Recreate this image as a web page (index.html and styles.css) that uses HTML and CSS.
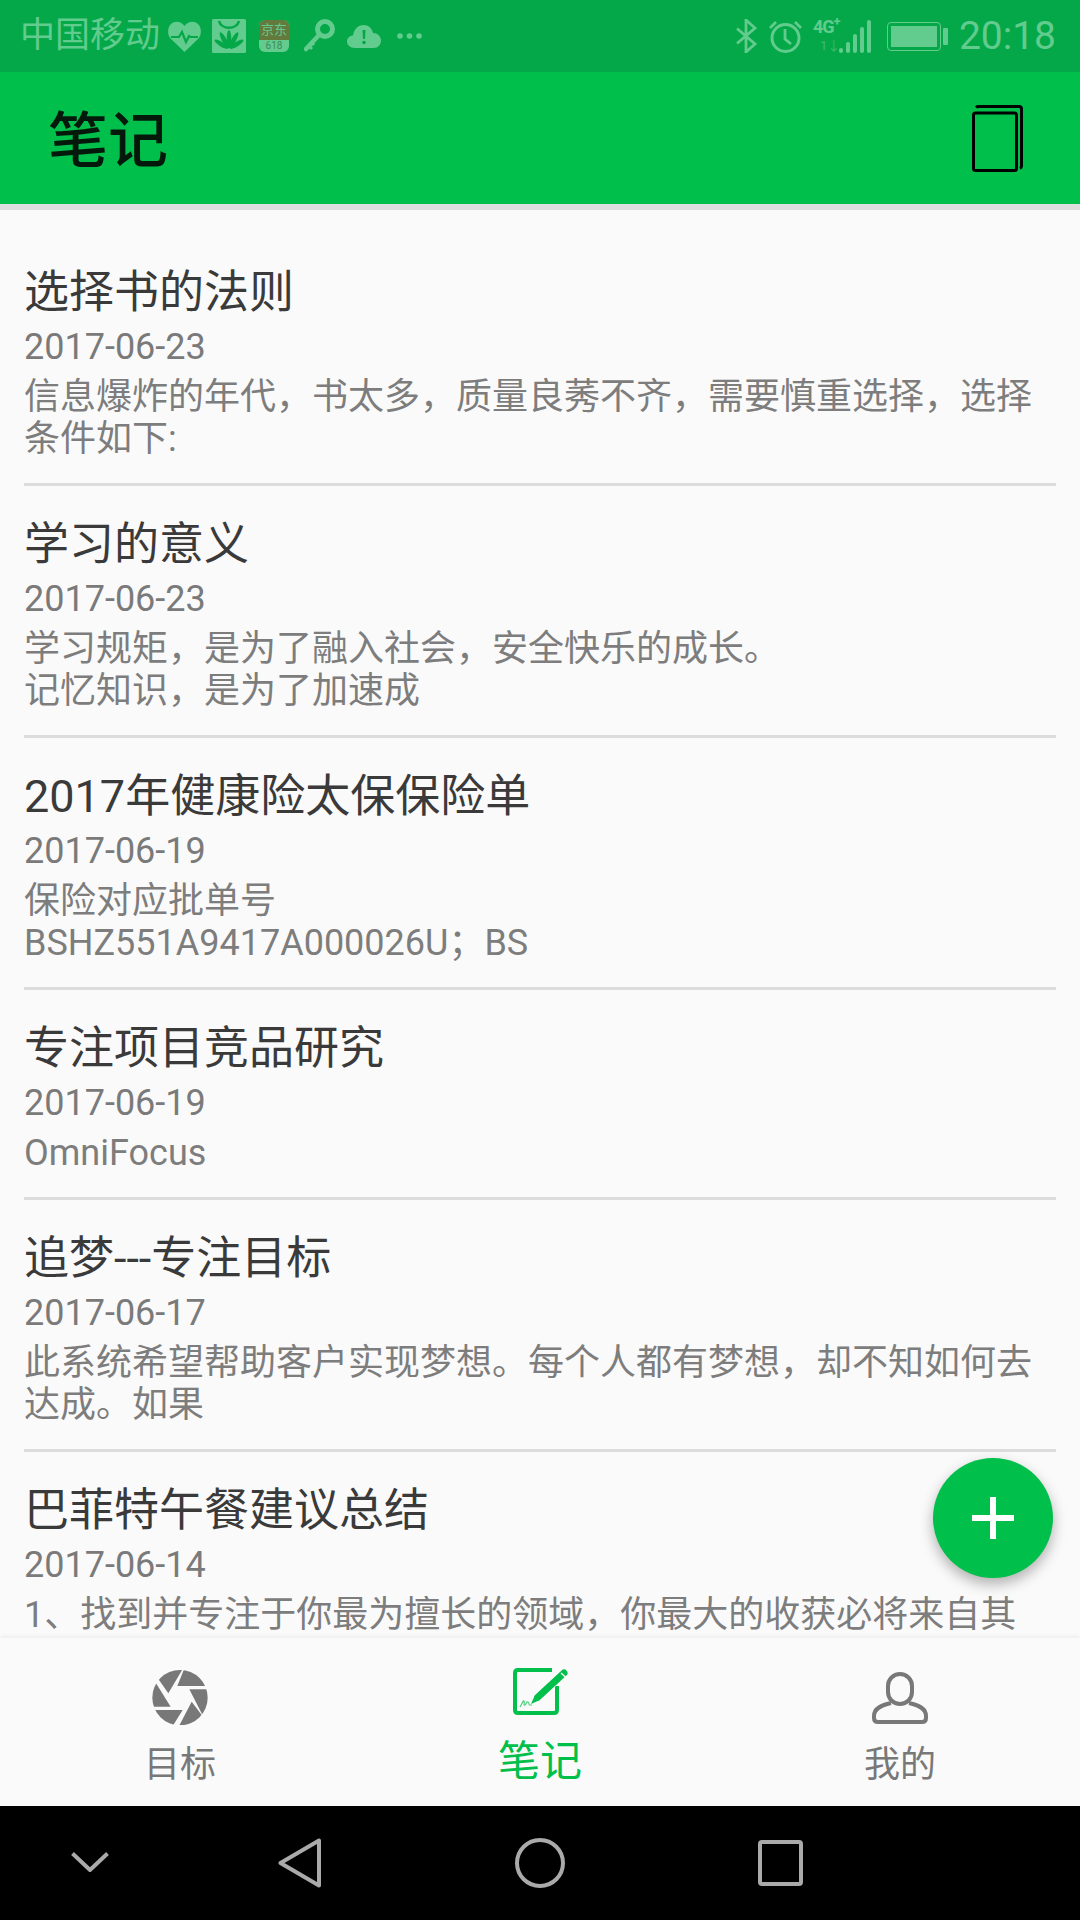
FILE: index.html
```html
<!DOCTYPE html>
<html lang="zh-CN">
<head>
  <meta charset="UTF-8" />
  <title>笔记</title>
  <link rel="stylesheet" href="styles.css">
</head>
<body>
  <div class="screen">

    <!-- Status bar -->
    <div class="status-bar">
      <div class="status-left">
        <span class="carrier">中国移动</span>
        <svg class="ic-heart" viewBox="0 0 33 31"><path d="M16.500 31 2.500 17.500C-1 13.500-.5 6 3 3c4-3.500 10-3 13.500 2C20 0 26-.5 30 3c3.500 3 4 10.500.5 14.500Z" fill="#62cb8e"/><path d="M3 16h8l3-5 4 10 3-6 1.500 1H30" fill="none" stroke="#05a848" stroke-width="2.200"/></svg>
        <svg class="ic-bag" viewBox="0 0 34 34"><rect width="34" height="34" rx="1.500" fill="#62cb8e"/><path d="M7 2c2 9 18 9 20 0" fill="none" stroke="#05a848" stroke-width="2.500"/><g fill="#05a848"><ellipse cx="17" cy="20" rx="2.300" ry="9"/><ellipse cx="17" cy="20" rx="2.300" ry="9" transform="rotate(-28 17 30)"/><ellipse cx="17" cy="20" rx="2.300" ry="9" transform="rotate(28 17 30)"/><ellipse cx="17" cy="21" rx="2.300" ry="8" transform="rotate(-58 17 30)"/><ellipse cx="17" cy="21" rx="2.300" ry="8" transform="rotate(58 17 30)"/></g></svg>
        <span class="ic-jd"><span class="jd-name">京东</span><span class="jd-sale">618</span></span>
        <svg class="ic-key" viewBox="0 0 31 34"><circle cx="21" cy="10" r="7.500" fill="none" stroke="#62cb8e" stroke-width="5"/><path d="M15 16 2 30" stroke="#62cb8e" stroke-width="4.500" stroke-linecap="round"/><path d="m5 27 3 3M8 24l2 2" stroke="#62cb8e" stroke-width="3"/></svg>
        <svg class="ic-cloud" viewBox="0 0 34 23"><path d="M8 23C3 23 0 20 0 16.500 0 13 3 10.500 6 10.500 7 4 11.500 0 16.500 0 21.500 0 25 3.500 26 8c4.500 0 8 3.500 8 7.500 0 4-3 7.500-7.500 7.500Z" fill="#62cb8e"/><path d="M15.500 5h3l-.5 9h-2Z" fill="#05a848"/><circle cx="17" cy="17.500" r="1.800" fill="#05a848"/></svg>
        <svg class="ic-dots" viewBox="0 0 25 6"><circle cx="3" cy="3" r="2.800"/><circle cx="12.500" cy="3" r="2.800"/><circle cx="22" cy="3" r="2.800"/></svg>
      </div>
      <div class="status-right">
        <svg class="ic-bt" viewBox="0 0 21 34"><path d="M1 9.500 19 25 10 33V1l9 8L1 24.500" fill="none" stroke="#62cb8e" stroke-width="2.800"/></svg>
        <svg class="ic-alarm" viewBox="0 0 33 33"><circle cx="16.500" cy="18" r="13.500" fill="none" stroke="#62cb8e" stroke-width="3"/><path d="M16 9v10l6 5" fill="none" stroke="#62cb8e" stroke-width="2.800"/><path d="M1 8 7 2M32 8 26 2" stroke="#62cb8e" stroke-width="2.800"/></svg>
        <span class="ic-signal">
          <span class="net-type">4G<sup>+</sup></span>
          <span class="net-arrows">1↓</span>
          <span class="bars"><i class="bar-1"></i><i class="bar-2"></i><i class="bar-3"></i><i class="bar-4"></i><i class="bar-5"></i></span>
        </span>
        <span class="battery"><span class="battery-body"><span class="battery-fill"></span></span><span class="battery-tip"></span></span>
        <span class="clock">20:18</span>
      </div>
    </div>

    <!-- Toolbar -->
    <div class="toolbar">
      <h1>笔记</h1>
      <svg class="ic-book" viewBox="0 0 51 67"><path d="M4 2.500C5 1.500 6 1.500 7 1.500H47c1.500 0 2.500 1 2.500 2.500V61c0 1-.5 2-1.500 2.500" fill="none" stroke="#000" stroke-width="3"/><rect x="1.500" y="8" width="43" height="57.500" rx="2" fill="none" stroke="#000" stroke-width="3"/></svg>
    </div>

    <!-- Notes -->
    <div class="notes">
      <div class="note">
        <div class="note-title">选择书的法则</div>
        <div class="note-date">2017-06-23</div>
        <div class="note-text">信息爆炸的年代，书太多，质量良莠不齐，需要慎重选择，选择条件如下:</div>
      </div>
      <div class="note">
        <div class="note-title">学习的意义</div>
        <div class="note-date">2017-06-23</div>
        <div class="note-text">学习规矩，是为了融入社会，安全快乐的成长。<br>记忆知识，是为了加速成</div>
      </div>
      <div class="note">
        <div class="note-title">2017年健康险太保保险单</div>
        <div class="note-date">2017-06-19</div>
        <div class="note-text">保险对应批单号<br>BSHZ551A9417A000026U；BS</div>
      </div>
      <div class="note">
        <div class="note-title">专注项目竞品研究</div>
        <div class="note-date">2017-06-19</div>
        <div class="note-text">OmniFocus</div>
      </div>
      <div class="note">
        <div class="note-title">追梦---专注目标</div>
        <div class="note-date">2017-06-17</div>
        <div class="note-text">此系统希望帮助客户实现梦想。每个人都有梦想，却不知如何去达成。如果</div>
      </div>
      <div class="note">
        <div class="note-title">巴菲特午餐建议总结</div>
        <div class="note-date">2017-06-14</div>
        <div class="note-text">1、找到并专注于你最为擅长的领域，你最大的收获必将来自其</div>
      </div>
    </div>

    <button class="fab" aria-label="新建笔记">
      <svg viewBox="0 0 42 42"><path d="M21 0v42M0 21h42" stroke="#fff" stroke-width="6"/></svg>
    </button>

    <!-- Tabs -->
    <div class="tabs">
      <div class="tab">
        <svg class="tab-icon" viewBox="36 21 168 174">
          <clipPath id="lens"><circle cx="120" cy="113" r="83"/></clipPath>
          <g clip-path="url(#lens)" fill="#787878">
            <polygon points="112,78 143,0 240,0 240,78"/>
            <polygon points="148,88 240,88 240,240 226,240"/>
            <polygon points="155,125 250,250 90,250"/>
            <polygon points="128,150 0,150 0,240 72,240"/>
            <polygon points="92,140 0,140 0,0 5,0"/>
            <polygon points="85,100 144,0 15,0"/>
          </g>
        </svg>
        <span class="tab-label">目标</span>
      </div>
      <div class="tab tab-active">
        <svg class="tab-icon" viewBox="20 12 60 58">
          <path d="M62 15H28c-2 0-3 1-3 3V55c0 2 1 3 3 3H64c2 0 3-1 3-3V31" fill="none" stroke="#00bf4a" stroke-width="4"/>
          <path d="M42 47 72 17" stroke="#fafafa" stroke-width="11"/>
          <path d="M48 42 74 18" stroke="#00bf4a" stroke-width="7" stroke-linecap="round"/>
          <path d="M71 18 76 22.500" stroke="#fafafa" stroke-width="1.500"/>
          <path d="M41 49 45 40 50 45Z" fill="#00bf4a"/>
          <path d="M30 52c2-3 3-7 4-6s-1 5 1 4 1-4 3-3 0 3 2 3h2" fill="none" stroke="#00bf4a" stroke-width="1.200" opacity="0.7"/>
        </svg>
        <span class="tab-label">笔记</span>
      </div>
      <div class="tab">
        <svg class="tab-icon" viewBox="0 -5 56 58">
          <rect x="16" y="2" width="24" height="30" rx="12" fill="none" stroke="#787878" stroke-width="4"/>
          <path d="M19 31C10 33 2 36 2 44V46C2 49 4 50 6 50H50C52 50 54 49 54 46V44C54 36 46 33 37 31" fill="none" stroke="#787878" stroke-width="4"/>
        </svg>
        <span class="tab-label">我的</span>
      </div>
    </div>

    <!-- System navigation -->
    <div class="sys-nav">
      <svg class="nav-down" viewBox="0 0 38 20"><path d="M1.500 1.500 19 18 36.500 1.500" fill="none" stroke="#aaa" stroke-width="4"/></svg>
      <svg class="nav-back" viewBox="0 0 43 50"><path d="M41 2.500V47.500L2.500 25Z" fill="none" stroke="#aaa" stroke-width="4" stroke-linejoin="round"/></svg>
      <svg class="nav-home" viewBox="0 0 50 50"><circle cx="25" cy="25" r="23" fill="none" stroke="#aaa" stroke-width="4"/></svg>
      <svg class="nav-recent" viewBox="0 0 45 46"><rect x="2" y="2" width="41" height="42" rx="2" fill="none" stroke="#aaa" stroke-width="4"/></svg>
    </div>

  </div>
</body>
</html>
```

FILE: styles.css
```css
/* Reset */
* {
  box-sizing: border-box;
}

body {
  margin: 0;
  font-family: Roboto, 'Noto Sans CJK SC', sans-serif;
  background: #000;
}

svg {
  display: block;
  flex-shrink: 0;
}

.screen {
  position: relative;
  width: 1080px;
  height: 1920px;
  display: flex;
  flex-direction: column;
  overflow: hidden;
  background: #fafafa;
}

/* Status bar */
.status-bar {
  height: 72px;
  padding: 0 24px 0 20px;
  display: flex;
  justify-content: space-between;
  align-items: center;
  background: #05a848;
  color: #62cb8e;
}
.status-left, .status-right {
  display: flex;
  align-items: center;
}
.carrier {
  width: 148px;
  font-size: 35px;
  line-height: 72px;
}
.ic-heart { width: 33px; height: 31px; }
.ic-bag { width: 34px; height: 34px; margin-left: 11px; }
.ic-jd {
  width: 30px;
  height: 32px;
  margin-left: 13px;
  border-radius: 6px;
  overflow: hidden;
  display: flex;
  flex-direction: column;
  align-items: center;
  background: #62cb8e;
}
.jd-name {
  width: 100%;
  height: 20px;
  font-size: 13px;
  line-height: 20px;
  text-align: center;
  color: #62cb8e;
  background: #637a3c;
}
.jd-sale {
  font-size: 10px;
  line-height: 12px;
  color: #3f8a58;
}
.ic-key { width: 31px; height: 34px; margin-left: 15px; }
.ic-cloud { width: 34px; height: 23px; margin-left: 12px; }
.ic-dots { width: 25px; height: 6px; margin-left: 16px; fill: #62cb8e; }

.ic-bt { width: 21px; height: 34px; }
.ic-alarm { width: 33px; height: 33px; margin-left: 12px; }
.ic-signal {
  position: relative;
  width: 58px;
  height: 34px;
  margin-left: 11px;
}
.net-type {
  position: absolute;
  left: 0;
  top: -1px;
  font-size: 18px;
  font-weight: 700;
  line-height: 18px;
  letter-spacing: -1px;
}
.net-type sup {
  font-size: 13px;
  line-height: 0;
}
.net-arrows {
  position: absolute;
  left: 7px;
  top: 19px;
  font-size: 13px;
  line-height: 15px;
  color: #3fba74;
}
.bars {
  position: absolute;
  right: 0;
  bottom: 0;
  display: flex;
  align-items: flex-end;
  gap: 3px;
}
.bars i {
  display: block;
  width: 4px;
  border-radius: 2px;
  background: #62cb8e;
}
.bar-1 { height: 5px; }
.bar-2 { height: 11px; }
.bar-3 { height: 19px; }
.bar-4 { height: 26px; }
.bar-5 { height: 33px; }

.battery {
  display: flex;
  align-items: center;
  gap: 2px;
  margin-left: 16px;
}
.battery-body {
  width: 54px;
  height: 29px;
  padding: 3px;
  border: 1.500px solid #62cb8e;
  border-radius: 4px;
}
.battery-fill {
  display: block;
  height: 100%;
  background: #62cb8e;
}
.battery-tip {
  width: 5px;
  height: 17px;
  border-radius: 1px;
  background: #62cb8e;
}
.clock {
  margin-left: 11px;
  font-size: 39px;
  line-height: 72px;
}

/* Toolbar */
.toolbar {
  height: 138px;
  padding: 0 57px 0 48px;
  display: flex;
  justify-content: space-between;
  align-items: center;
  background: #00bf4a;
  border-bottom: 6px solid #dedede;
}
.toolbar h1 {
  margin: 8px 0 0;
  font-size: 60px;
  font-weight: 500;
  line-height: 124px;
  color: #04190c;
}
.ic-book { width: 51px; height: 67px; }

/* Notes */
.notes {
  flex: 1;
  min-height: 0;
  padding: 24px 24px 0;
  overflow: hidden;
}
.note {
  padding-top: 29px;
  padding-bottom: 23px;
  border-bottom: 3px solid #dcdcdc;
}
.note-title {
  font-size: 45px;
  line-height: 60px;
  color: #3a3a3a;
}
.note-date {
  margin-top: 1px;
  font-size: 36px;
  line-height: 46px;
  color: #7a7a7a;
}
.note-text {
  margin-top: 6px;
  font-size: 36px;
  line-height: 42px;
  color: #7d7d7d;
}

/* Floating add button */
.fab {
  position: absolute;
  left: 933px;
  top: 1458px;
  width: 120px;
  height: 120px;
  padding: 0;
  border: none;
  border-radius: 50%;
  display: flex;
  justify-content: center;
  align-items: center;
  background: #00bf4a;
  box-shadow: 0 6px 14px rgba(0,0,0,0.3);
}
.fab svg {
  width: 42px;
  height: 42px;
}

/* Tabs */
.tabs {
  height: 168px;
  display: grid;
  grid-template-columns: repeat(3, 1fr);
  background: #fafafa;
  box-shadow: 0 -2px 4px rgba(0,0,0,0.05);
  position: relative;
}
.tab {
  padding-top: 29px;
  display: flex;
  flex-direction: column;
  align-items: center;
  color: #787878;
}
.tab-icon {
  width: 56px;
  height: 58px;
}
.tab-label {
  margin-top: 15px;
  font-size: 36px;
  line-height: 50px;
}
.tab-active {
  color: #00bf4a;
}
.tab-active .tab-icon {
  width: 60px;
}
.tab-active .tab-label {
  margin-top: 12px;
  font-size: 42px;
}

/* System navigation */
.sys-nav {
  height: 114px;
  position: relative;
  background: #000;
}
.sys-nav svg {
  position: absolute;
}
.nav-down { left: 71px; top: 46px; width: 38px; height: 20px; }
.nav-back { left: 278px; top: 32px; width: 43px; height: 50px; }
.nav-home { left: 515px; top: 32px; width: 50px; height: 50px; }
.nav-recent { left: 758px; top: 34px; width: 45px; height: 46px; }
```
